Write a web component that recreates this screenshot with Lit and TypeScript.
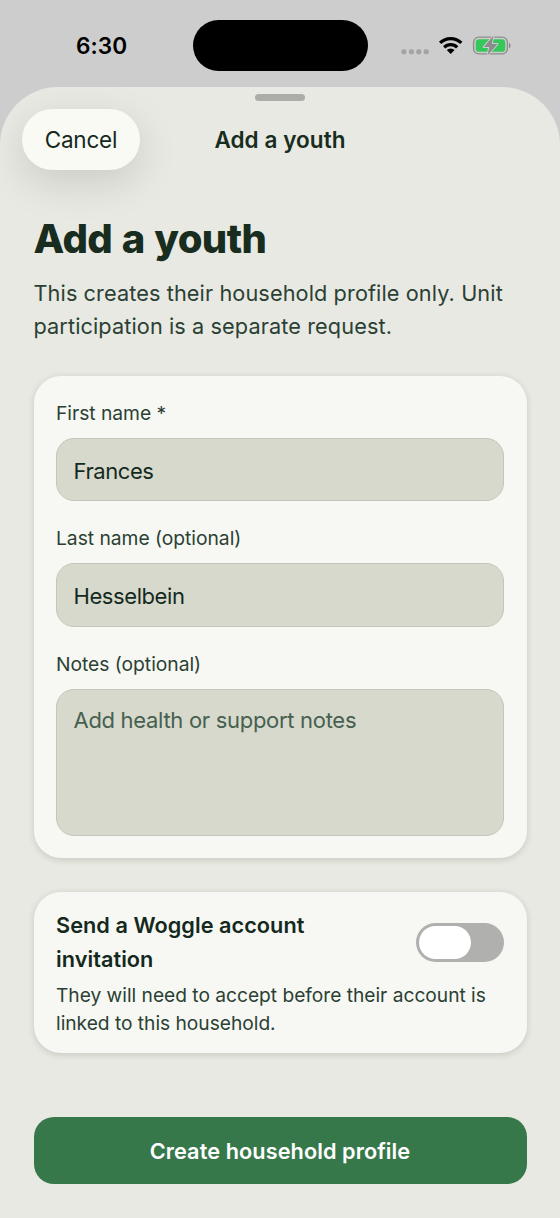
import { LitElement, html, css } from "lit";
import { customElement, state } from "lit/decorators.js";

@customElement("status-bar")
class StatusBar extends LitElement {
  static styles = css`
    :host { display: grid; grid-template-columns: 192.5px 175px 1fr; height: 71px; padding-top: 20px; box-sizing: border-box; }
    .time { padding-left: 76px; line-height: 51px; font-size: 22.6px; font-weight: 600; color: #000; letter-spacing: 0.1px; }
    .island { height: 51px; border-radius: 26px; background: #000; }
    .icons { display: block; width: 112px; height: 22px; margin: 14px 0 0 32.5px; }
  `;
  render() {
    return html`
      <div class="time">6:30</div>
      <div class="island"></div>
      <svg class="icons" viewBox="400 34 112 22">
        <g fill="#a3a3a3">
          <rect x="401.4" y="49.2" width="5" height="5" rx="1.8" />
          <rect x="408.9" y="49.2" width="5" height="5" rx="1.8" />
          <rect x="416.3" y="49.2" width="5" height="5" rx="1.8" />
          <rect x="423.7" y="49.2" width="5" height="5" rx="1.8" />
        </g>
        <g fill="none" stroke="#000" stroke-width="3.3">
          <path d="M440.1 42.9A15.2 15.2 0 0 1 461.3 42.9" />
          <path d="M444.2 47.3A9.2 9.2 0 0 1 457.2 47.3" />
        </g>
        <path d="M450.7 54L446.8 50.1A5.6 5.6 0 0 1 454.6 50.1Z" />
        <rect x="473.6" y="37.1" width="33.8" height="16.8" rx="5.2" fill="none" stroke="#8b8d8c" stroke-width="1.4" />
        <rect x="475.7" y="39.2" width="29.6" height="12.6" rx="3.4" fill="#34c759" />
        <path d="M509 42.7Q510.7 43.5 510.7 45.5T509 48.3Z" fill="#8b8d8c" />
        <path d="M493.4 35.8L483.8 47H489.3L487.6 55.2L497.6 43.9H491.8Z" fill="#8b8d8c" stroke="#cdcdcd" stroke-width="2" stroke-linejoin="round" paint-order="stroke" />
      </svg>
    `;
  }
}

@customElement("text-field")
class TextField extends LitElement {
  static properties = {
    label: { type: String },
    value: { type: String },
    placeholder: { type: String },
    multiline: { type: Boolean },
  };
  declare label: string;
  declare value: string;
  declare placeholder: string;
  declare multiline: boolean;
  static styles = css`
    :host { display: flex; flex-direction: column; gap: 11px; }
    .label { font-size: 19.3px; line-height: 28px; letter-spacing: -0.04px; color: #2b4034; }
    .box {
      box-sizing: border-box; height: 63.5px; border: 1.5px solid #c3c6ba; border-radius: 18px;
      background: #d7d9cc; color: #14291d; padding: 17px 16.5px; font-size: 22px; line-height: 31px; letter-spacing: -0.42px;
    }
    .area { height: 147.5px; padding-top: 15.5px; }
    .placeholder { color: #46604f; letter-spacing: -0.3px; }
  `;
  render() {
    return html`
      <div class="label">${this.label}</div>
      <div class="box ${this.multiline ? "area" : ""} ${this.value ? "" : "placeholder"}">${this.value || this.placeholder}</div>
    `;
  }
}

@customElement("app-root")
class AppRoot extends LitElement {
  @state() private invite = false;

  static styles = css`
    :host { display: block; height: 1218px; overflow: hidden; background: #cdcdcd; font-family: Inter, "Liberation Sans", sans-serif; }
    .sheet {
      box-sizing: border-box; height: 1131.5px; margin-top: 15.5px; padding-top: 7px;
      background: #e8e9e2; border-radius: 58px 58px 0 0; overflow: hidden;
    }
    .grabber { width: 50px; height: 7px; margin: 0 auto; border-radius: 4px; background: #acada8; }
    .nav { display: grid; grid-template-columns: 118px 1fr 118px; align-items: center; margin-top: 8.5px; padding: 0 22px; height: 61px; }
    .cancel {
      height: 61px; border-radius: 31px; background: #f8faf3; color: #14291d; text-align: center;
      font-size: 22.5px; line-height: 62px; letter-spacing: -0.2px; box-shadow: 0 12px 40px rgba(0, 0, 0, 0.13);
    }
    .nav-title { text-align: center; font-size: 22.5px; font-weight: 600; color: #182c20; letter-spacing: 0.07px; }
    .content { padding: 44px 33.5px 0; }
    .heading { margin: 0; font-size: 40px; line-height: 49px; font-weight: 800; letter-spacing: -0.6px; word-spacing: 1.4px; color: #182c20; }
    .intro { margin: 13.5px 0 32.5px; font-size: 21.7px; line-height: 33.5px; letter-spacing: 0.1px; color: #2b4034; white-space: nowrap; }
    .card { box-sizing: border-box; border-radius: 27px; background: #f7f8f3; box-shadow: 0 1.5px 6px rgba(40, 50, 40, 0.16); padding: 22.5px; }
    .fields { display: flex; flex-direction: column; gap: 23px; height: 481.5px; }
    .invite { margin-top: 34px; height: 161px; padding-top: 17.5px; }
    .row { display: flex; justify-content: space-between; align-items: center; }
    .invite-title { font-size: 21.7px; line-height: 33.5px; font-weight: 600; color: #14291d; letter-spacing: 0.04px; }
    .invite-text { margin-top: 6px; font-size: 19.2px; line-height: 27.8px; letter-spacing: -0.02px; color: #2b4034; white-space: nowrap; }
    .switch { box-sizing: border-box; display: flex; width: 88px; height: 39px; padding: 2.7px; border-radius: 20px; background: #b0b0ae; }
    .switch.on { justify-content: flex-end; background: #37784a; }
    .knob { width: 52px; border-radius: 17px; background: #fff; }
    .submit {
      margin-top: 64.5px; height: 67px; border-radius: 20px; background: #37784a; color: #fff;
      text-align: center; font-size: 21.7px; line-height: 68.5px; font-weight: 600; letter-spacing: 0.08px;
    }
  `;

  render() {
    return html`
      <status-bar></status-bar>
      <div class="sheet">
        <div class="grabber"></div>
        <div class="nav">
          <div class="cancel">Cancel</div>
          <div class="nav-title">Add a youth</div>
        </div>
        <div class="content">
          <h1 class="heading">Add a youth</h1>
          <p class="intro">This creates their household profile only. Unit<br />participation is a separate request.</p>
          <div class="card fields">
            <text-field label="First name *" value="Frances"></text-field>
            <text-field label="Last name (optional)" value="Hesselbein"></text-field>
            <text-field label="Notes (optional)" placeholder="Add health or support notes" multiline></text-field>
          </div>
          <div class="card invite">
            <div class="row">
              <div class="invite-title">Send a Woggle account<br />invitation</div>
              <div class="switch ${this.invite ? "on" : ""}" @click=${() => (this.invite = !this.invite)}><div class="knob"></div></div>
            </div>
            <div class="invite-text">They will need to accept before their account is<br />linked to this household.</div>
          </div>
          <div class="submit">Create household profile</div>
        </div>
      </div>
    `;
  }
}
